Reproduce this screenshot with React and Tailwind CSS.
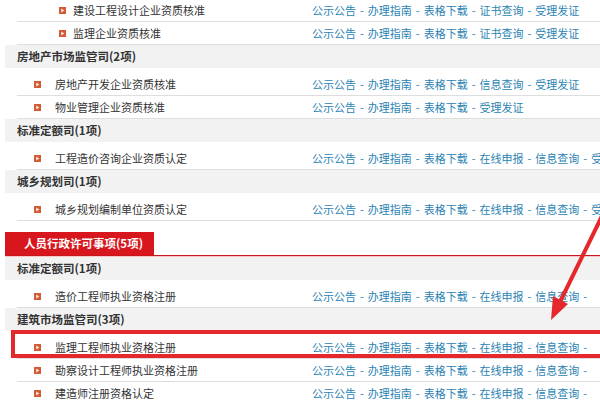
import React from 'react';

const CERT = ['公示公告', '办理指南', '表格下载', '证书查询', '受理发证'];
const INFO = ['公示公告', '办理指南', '表格下载', '信息查询', '受理发证'];
const BASIC = ['公示公告', '办理指南', '表格下载', '受理发证'];
const ONLINE = ['公示公告', '办理指南', '表格下载', '在线申报', '信息查询', '受理发证'];
const PERSON = ['公示公告', '办理指南', '表格下载', '在线申报', '信息查询'];

const font = { fontFamily: '"Noto Sans CJK SC", "Noto Sans", sans-serif' };

const Bullet = () => (
    <svg width="7" height="7" viewBox="0 0 7 7" className="shrink-0">
        <rect x="0" y="0" width="7" height="7" fill="#d45a36" />
        <polygon points="2.2,1.6 5.4,3.5 2.2,5.4" fill="#fbe3d8" />
    </svg>
);

const Links = ({ items, trailing }) => (
    <div className="flex items-center whitespace-nowrap text-[11px] text-[#2b83b3]">
        {items.map((label, i) => (
            <React.Fragment key={label}>
                {i > 0 && <span className="mx-[4px]">-</span>}
                <span>{label}</span>
            </React.Fragment>
        ))}
        {trailing && <span className="mx-[4px]">-</span>}
    </div>
);

const Item = ({ title, links, deep, trailing, last }) => (
    <div className={`ml-[12px] flex h-[23px] items-center overflow-hidden bg-white ${last ? '' : 'border-b border-[#dedede]'}`}>
        <div className={`flex w-[295px] shrink-0 items-center ${deep ? 'pl-[42px]' : 'pl-[17px]'}`}>
            <Bullet />
            <span className={`text-[11px] text-[#333] ${deep ? 'ml-[7px]' : 'ml-[14px]'}`}>{title}</span>
        </div>
        <Links items={links} trailing={trailing} />
    </div>
);

const Header = ({ children }) => (
    <div className="flex h-[23px] items-center bg-[#f2f2f2] pl-[12px] text-[11.5px] font-bold text-[#333]">
        {children}
    </div>
);

export default function App() {
    return (
        <div className="relative h-[400px] w-[600px] overflow-hidden bg-white pl-[5px]" style={font}>
            <div className="-mt-px">
                <Item deep title="建设工程设计企业资质核准" links={CERT} />
                <Item deep title="监理企业资质核准" links={CERT} />
            </div>

            <Header>房地产市场监管司(2项)</Header>
            <div className="pt-[5px]">
                <Item title="房地产开发企业资质核准" links={INFO} />
                <Item title="物业管理企业资质核准" links={BASIC} />
            </div>

            <Header>标准定额司(1项)</Header>
            <div className="pt-[5px]">
                <Item title="工程造价咨询企业资质认定" links={ONLINE} />
            </div>

            <Header>城乡规划司(1项)</Header>
            <div className="pt-[5px]">
                <Item title="城乡规划编制单位资质认定" links={ONLINE} />
            </div>

            {/* personnel tab */}
            <div className="mt-[11px] flex items-end">
                <div className="flex h-[23px] w-[149px] items-center bg-[#d7161d] pl-[19px] text-[11.5px] font-bold text-white">
                    人员行政许可事项(5项)
                </div>
            </div>
            <div className="h-px bg-[#c8161d]" />
            <div className="h-px bg-[#f3c9c9]" />

            <Header>标准定额司(1项)</Header>
            <div className="pt-[5px]">
                <Item title="造价工程师执业资格注册" links={PERSON} trailing />
            </div>

            <Header>建筑市场监管司(3项)</Header>
            <div className="pt-[5px]">
                <Item title="监理工程师执业资格注册" links={PERSON} trailing />
                <Item title="勘察设计工程师执业资格注册" links={PERSON} trailing />
                <Item title="建造师注册资格认定" links={PERSON} trailing last />
            </div>

            {/* annotation: highlight box */}
            <div className="pointer-events-none absolute left-[11px] top-[330px] h-[28px] w-[600px] border-[4px] border-[#e5282c]" />

            {/* annotation: arrow */}
            <svg className="pointer-events-none absolute left-0 top-0" width="600" height="400" viewBox="0 0 600 400">
                <line x1="604" y1="212" x2="558" y2="306" stroke="#e5282c" strokeWidth="4" strokeLinecap="round" />
                <polygon points="551,320 553,296 568,304" fill="#e5282c" />
            </svg>
        </div>
    );
}
